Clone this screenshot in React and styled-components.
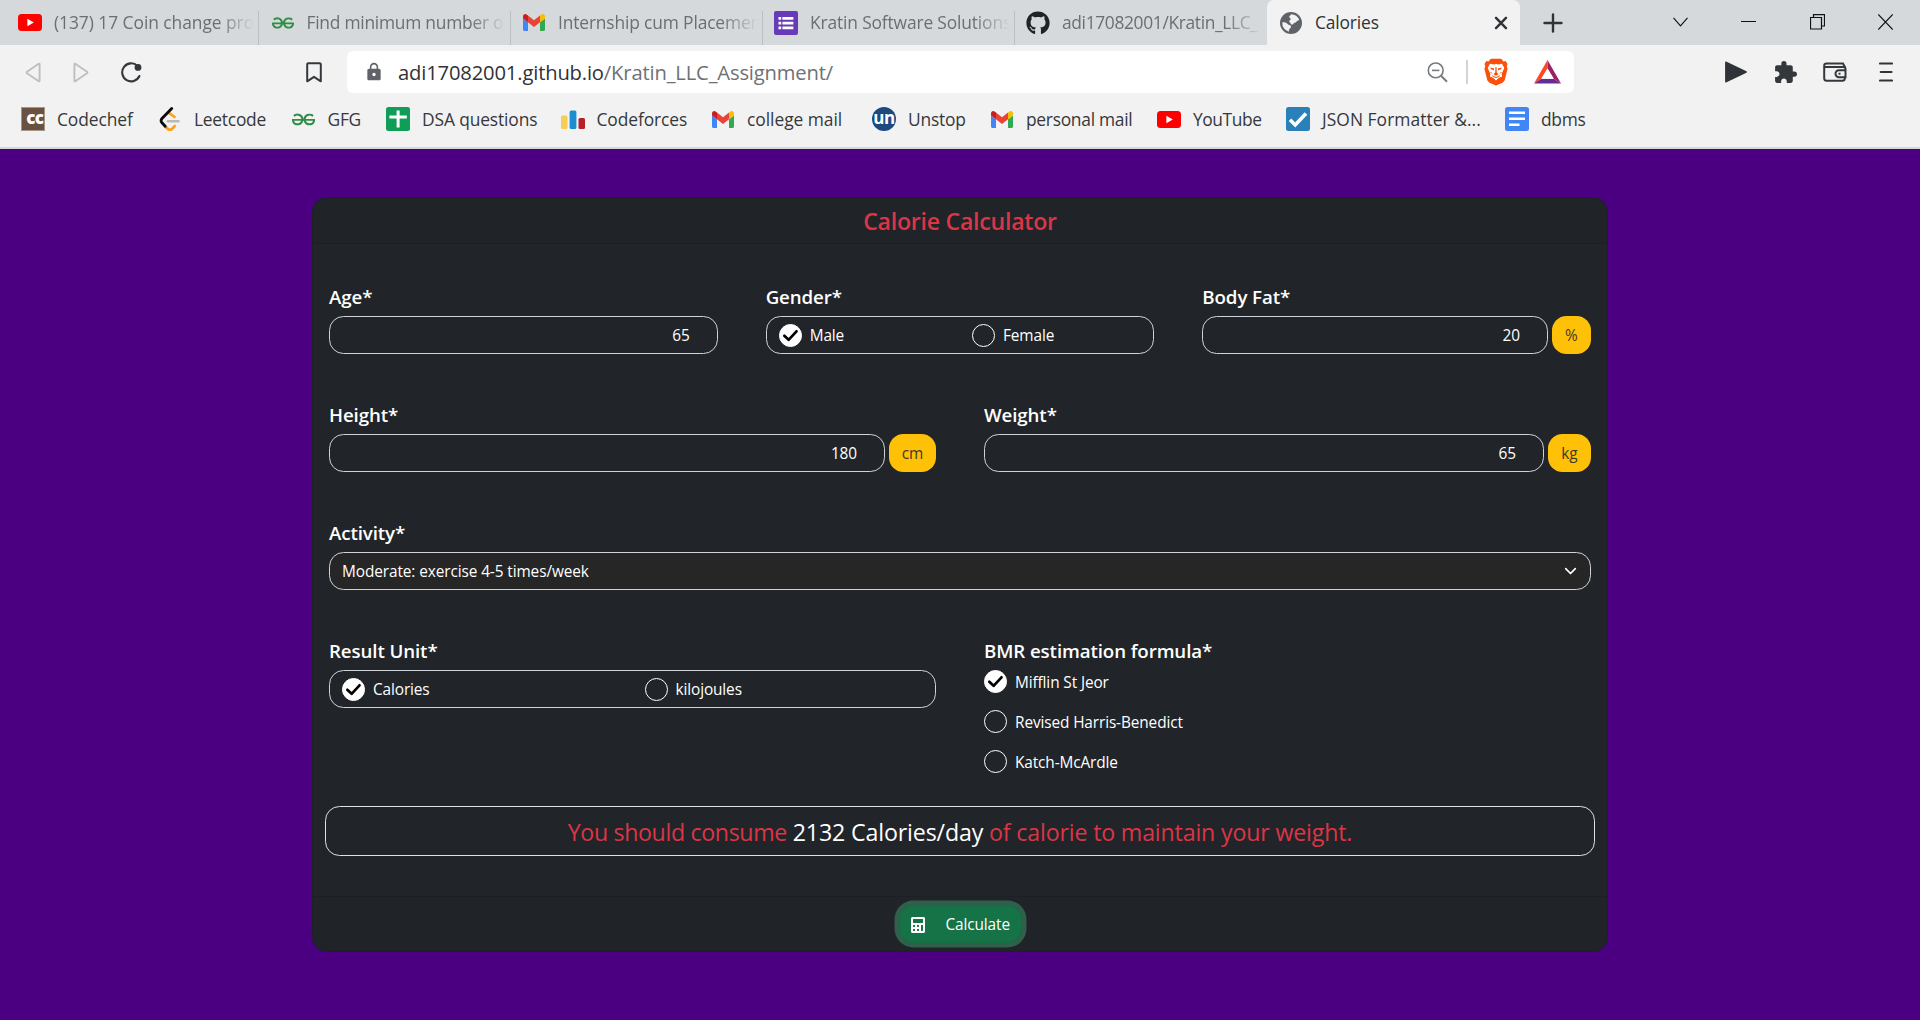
import React, { useState } from 'react';
import styled, { createGlobalStyle, css } from 'styled-components';
import { FaGithub, FaCalculator } from 'react-icons/fa';
import { SiGeeksforgeeks } from 'react-icons/si';
import { MdExtension, MdLock } from 'react-icons/md';

const GlobalStyle = createGlobalStyle`
  *, *::before, *::after { box-sizing: border-box; }
  body {
    margin: 0;
    background: #4b0082;
    font-family: "Open Sans", "Noto Sans", sans-serif;
  }
  svg { display: block; flex: none; }
`;

const Page = styled.div`
  width: 100%;
  min-height: 1020px;
  overflow: hidden;
`;

/* ---------- browser frame ---------- */

const TabStrip = styled.div`
  display: flex;
  height: 45px;
  padding-left: 7px;
  background: #d5d9dc;
`;

const Tab = styled.div`
  display: flex;
  align-items: center;
  flex: none;
  width: ${p => (p.$active ? 253 : 252)}px;
  padding: 0 12px 0 ${p => p.$pad ?? 11}px;
  color: ${p => (p.$active ? '#2f3337' : '#6b6f73')};
  ${p => p.$active && css`
    background: #f2f2f2;
    border-radius: 7px 7px 0 0;
  `}
  ${p => p.$divider && css`
    background: linear-gradient(#bcbfc1, #bcbfc1) right bottom / 1.5px 34px no-repeat;
  `}
`;

const TabIcon = styled.span`
  display: flex;
  align-items: center;
  justify-content: center;
  flex: none;
  width: 24px;
  height: 26px;
`;

const TabTitle = styled.span`
  flex: 1;
  min-width: 0;
  margin-left: 12px;
  margin-right: -7px;
  padding-bottom: 1px;
  white-space: nowrap;
  font-size: 17.4px;
  line-height: 26px;
  letter-spacing: ${p => p.$track ?? 0}px;
  font-weight: ${p => (p.$fade ? 400 : 500)};
  ${p => p.$fade && css`
    mask-image: linear-gradient(90deg, #000 calc(100% - 36px), transparent);
  `}
`;

const NewTab = styled.div`
  display: flex;
  align-items: center;
  margin-left: 23px;
`;

const WindowControls = styled.div`
  display: flex;
  align-items: center;
  gap: 53.5px;
  margin-left: auto;
  padding: 0 27px 2px 0;
`;

const Toolbar = styled.div`
  display: flex;
  align-items: center;
  height: 54px;
  padding-left: 25px;
  background: #f2f2f2;
`;

const NavButtons = styled.div`
  display: flex;
  align-items: center;
  gap: 32px;
  width: 281px;
`;

const AddressBar = styled.div`
  display: flex;
  align-items: center;
  width: 1227px;
  height: 42px;
  margin-left: 25px;
  padding: 0 13px 0 17px;
  border-radius: 6px;
  background: #fff;
`;

const Url = styled.div`
  flex: 1;
  margin-left: 14px;
  font-size: 20.2px;
  line-height: 30px;
  letter-spacing: -0.16px;
  color: #6e7174;
  & > span { color: #2f3236; }
`;

const Separator = styled.span`
  width: 2px;
  height: 24px;
  margin: 0 16px 0 18px;
  background: #d4d4d4;
`;

const Shields = styled.div`
  display: flex;
  align-items: center;
  gap: 26px;
`;

const ToolbarActions = styled.div`
  display: flex;
  align-items: center;
  gap: 25.5px;
  margin-left: 151px;
  & > :last-child { margin-left: 6px; }
`;

const BookmarkBar = styled.div`
  display: flex;
  height: 50px;
  padding: 0 0 8px 21px;
  background: #f2f2f2;
  border-bottom: 2px solid #d5d9dc;
`;

const Bookmark = styled.div`
  display: flex;
  align-items: center;
  flex: none;
  gap: 12px;
  width: ${p => p.$w}px;
  font-size: 17.4px;
  line-height: 26px;
  letter-spacing: ${p => p.$track ?? -0.1}px;
  white-space: nowrap;
  color: #35383c;
`;

const BookmarkIcon = styled.span`
  display: flex;
  align-items: center;
  justify-content: center;
  width: 24px;
  height: 24px;
`;

const CodechefBadge = styled.span`
  display: flex;
  align-items: center;
  justify-content: flex-end;
  width: 24px;
  height: 24px;
  padding: 0 1px 2px 0;
  border: 1px solid #a59788;
  background: #6b5140;
  color: #fff;
  font-size: 17px;
  font-weight: 800;
  letter-spacing: -0.8px;
`;

const UnstopBadge = styled.span`
  display: flex;
  align-items: center;
  justify-content: center;
  width: 24px;
  height: 24px;
  padding-bottom: 3px;
  border-radius: 50%;
  background: #1c4980;
  color: #fff;
  font-size: 17px;
  font-weight: 700;
  letter-spacing: -0.5px;
`;

/* ---------- calculator ---------- */

const Main = styled.main`
  display: flex;
  justify-content: center;
  padding-top: 48px;
`;

const Card = styled.section`
  width: 1296px;
  border: 1px solid #1e1f28;
  border-radius: 15px;
  overflow: hidden;
  background: #212529;
  color: #fff;
`;

const CardHeader = styled.header`
  display: flex;
  align-items: center;
  justify-content: center;
  height: 46px;
  padding-top: 1px;
  border-bottom: 1px solid #1c1f23;
  background: #202327;
`;

const Title = styled.h1`
  margin: 0;
  font-size: 23.2px;
  font-weight: 600;
  line-height: 32px;
  letter-spacing: -0.28px;
  color: #dc3545;
`;

const Form = styled.div`
  display: flex;
  flex-direction: column;
  gap: 47px;
  padding: 39px 16px 0;
`;

const FormRow = styled.div`
  display: grid;
  grid-template-columns: repeat(${p => p.$cols}, 1fr);
  gap: 48px;
`;

const FieldLabel = styled.div`
  height: 28px;
  margin-bottom: 5px;
  font-size: 18.7px;
  font-weight: 650;
  line-height: 28px;
  letter-spacing: ${p => p.$track ?? -0.1}px;
`;

const InputGroup = styled.div`
  display: flex;
  gap: 4px;
`;

const Control = styled.div`
  display: flex;
  align-items: center;
  flex: 1;
  height: 38px;
  border: 1px solid #ced4da;
  border-radius: 14.5px;
  font-size: 15.4px;
  letter-spacing: -0.1px;
`;

const NumberControl = styled(Control)`
  justify-content: flex-end;
  padding-right: 27px;
`;

const SelectControl = styled(Control)`
  justify-content: space-between;
  padding: 0 13px 0 12px;
  background: #262626;
`;

const RadioControl = styled(Control)`
  display: grid;
  grid-template-columns: calc(50% + 7px) 1fr;
  padding: 0 2px 0 12px;
`;

const Unit = styled.div`
  display: flex;
  align-items: center;
  justify-content: center;
  width: ${p => p.$w}px;
  height: 38px;
  border-radius: 14.5px;
  background: #ffc107;
  color: #3d3a2a;
  font-size: 15.4px;
`;

const Choice = styled.div`
  display: flex;
  align-items: center;
  gap: 8px;
  height: 23px;
  font-size: 15.4px;
  letter-spacing: -0.12px;
  cursor: pointer;
  & > span:last-child { line-height: 22px; padding-top: 2px; }
`;

const Dot = styled.span`
  display: flex;
  width: 23px;
  height: 23px;
  border-radius: 50%;
  border: 1px solid #fff;
  background: ${p => (p.$on ? '#fff' : 'transparent')};
`;

const Stack = styled.div`
  display: flex;
  flex-direction: column;
  gap: 17px;
`;

const Result = styled.div`
  display: flex;
  align-items: center;
  justify-content: center;
  height: 50px;
  margin: 33px 12px 40px;
  padding-top: 1px;
  border: 1px solid #dee2e6;
  border-radius: 14.5px;
  font-size: 23.2px;
  color: #dc3545;
  white-space: pre;
`;

const Phrase = styled.span`
  letter-spacing: ${p => p.$track}px;
  color: ${p => (p.$strong ? '#fff' : '#dc3545')};
`;

const CardFooter = styled.footer`
  display: flex;
  align-items: center;
  justify-content: center;
  height: 55px;
  border-top: 1px solid #1c1f23;
  background: #202327;
`;

const CalculateButton = styled.button`
  display: flex;
  align-items: center;
  gap: 20px;
  width: 123px;
  height: 38px;
  padding: 1px 0 0 10px;
  border: 1px solid #146c43;
  border-radius: 14.5px;
  background: #157347;
  box-shadow: 0 0 0 4.5px #305f4b;
  color: #fff;
  font: 400 15.4px/22px "Open Sans", sans-serif;
  letter-spacing: -0.12px;
`;

/* ---------- drawings ---------- */

const YouTubeIcon = () => (
  <svg width="24" height="17" viewBox="0 0 24 17">
    <rect width="24" height="17" rx="3.5" fill="#f00" />
    <path d="M9.4 4.8v7.4L15.8 8.5z" fill="#fff" />
  </svg>
);

const GmailIcon = () => (
  <svg width="22" height="17" viewBox="52 42 88 66" preserveAspectRatio="none">
    <path fill="#4285f4" d="M58 108h14V74L52 59v43c0 3.32 2.69 6 6 6" />
    <path fill="#34a853" d="M120 108h14c3.32 0 6-2.69 6-6V59l-20 15" />
    <path fill="#fbbc04" d="M120 48v26l20-15v-8c0-7.42-8.47-11.65-14.4-7.2" />
    <path fill="#ea4335" d="M72 74V48l24 18 24-18v26L96 92" />
    <path fill="#c5221f" d="M52 51v8l20 15V48l-5.6-4.2c-5.94-4.45-14.4-.22-14.4 7.2" />
  </svg>
);

const FormsIcon = () => (
  <svg width="24" height="24" viewBox="0 0 24 24">
    <rect width="24" height="24" rx="2" fill="#673ab7" />
    <path fill="#fff" d="M4.500 6h2.700v2.700H4.500zM4.500 10.800h2.700v2.700H4.500zM4.500 15.600h2.700v2.700H4.500zM8.400 6h11v2.700h-11zM8.400 10.800h11v2.700h-11zM8.400 15.600h11v2.700h-11z" />
  </svg>
);

const GlobeIcon = () => (
  <svg width="22" height="22" viewBox="0 0 22 22">
    <circle cx="11" cy="11" r="11" fill="#5f6368" />
    <path d="M11.200 2.200c3.600.1 6.700 2.300 8 5.400-.8 1.400-2 .9-2.800 2.100-.7 1.200-2.700 1-3.200 2.300-.5 1-2.300.7-2.600-.6-.2-1.100-1.500-.9-1.400-2.100.1-1.100 1.500-1 1.600-2 .1-1.200-1.700-1.100-1.600-2.500.1-1.200 1.700-1.300 2-2.600z" fill="#f2f2f2" />
    <path d="M2.300 10.400c2.200-.2 4.200.2 5.300 1.700 1 1.300 3.100.7 3.400 2.300.3 1.500-1.500 1.700-1.800 3-.2 1-.5 1.600-.3 2.300a8.900 8.900 0 0 1-6.600-9.300z" fill="#f2f2f2" />
  </svg>
);

const LeetcodeIcon = () => (
  <svg width="22" height="24" viewBox="0 0 22 24" fill="none" strokeLinecap="round">
    <path d="M9.500 5.600 15.600 10" stroke="#ffa116" strokeWidth="2.600" />
    <path d="M6.300 19.600l2.500 2.300c1.300 1.100 3.200 1 4.400-.2l2.500-2.600" stroke="#ffa116" strokeWidth="2.800" />
    <path d="M12.700 1.500 3 11.500c-1.100 1.300-1.100 3 0 4.300l3.200 3.500" stroke="#0a0a0a" strokeWidth="2.800" />
    <path d="M9 14.200h10.500" stroke="#b9b9b9" strokeWidth="2.600" />
  </svg>
);

const PlusSheetIcon = () => (
  <svg width="24" height="24" viewBox="0 0 24 24">
    <rect width="24" height="24" rx="2.500" fill="#0f9d58" />
    <path d="M10.600 3.500h3v5h7.200v3h-7.200v9h-3v-9H3.400v-3h7.200z" fill="#fff" />
  </svg>
);

const CodeforcesIcon = () => (
  <svg width="24" height="20" viewBox="0 0 24 20">
    <rect x="0" y="6.500" width="6.500" height="13.500" rx="1.500" fill="#f6cd55" />
    <rect x="8.600" y="1.500" width="6.800" height="18.500" rx="1.500" fill="#1c8dd0" />
    <rect x="17.500" y="9" width="6.500" height="11" rx="1.500" fill="#b71f2a" />
  </svg>
);

const CheckBadgeIcon = () => (
  <svg width="24" height="24" viewBox="0 0 24 24">
    <rect width="24" height="24" rx="2.500" fill="#2a80b9" />
    <path d="M4 12.800 9.200 18 20 6.400" fill="none" stroke="#fff" strokeWidth="3.600" />
  </svg>
);

const DocsIcon = () => (
  <svg width="24" height="24" viewBox="0 0 24 24">
    <rect width="24" height="24" rx="2.500" fill="#4285f4" />
    <path d="M4 4.400h16v2.600H4zM4 10.400h16v2.600H4zM4 16.400h10.500v2.600H4z" fill="#fff" />
  </svg>
);

const Triangle = ({ flip }) => (
  <svg width="16" height="21" viewBox="0 0 16 21" transform={flip ? 'scale(-1 1)' : undefined}>
    <path d="M14.600 2.300v16.400c0 .6-.5.8-.9.5L2 11.300a1 1 0 0 1 0-1.600L13.700 1.800c.4-.3.9-.1.9.5z" fill="none" stroke="#bdbfc0" strokeWidth="1.900" strokeLinejoin="round" />
  </svg>
);

const ReloadIcon = () => (
  <svg width="21" height="21" viewBox="0 0 21 21">
    <path d="M18.400 14A9 9 0 1 1 16.500 3.900" fill="none" stroke="#34383c" strokeWidth="2.100" strokeLinecap="round" />
    <circle cx="17" cy="5.400" r="3.400" fill="#34383c" />
  </svg>
);

const BookmarkIconOutline = () => (
  <svg width="16" height="21" viewBox="0 0 16 21">
    <path d="M1.200 2.300c0-.7.4-1.100 1.100-1.100h11.400c.7 0 1.100.4 1.100 1.100v17L8 14.800l-6.800 4.500z" fill="none" stroke="#34383c" strokeWidth="2" strokeLinejoin="round" />
  </svg>
);

const ZoomOutIcon = () => (
  <svg width="21" height="21" viewBox="0 0 21 21" fill="none" stroke="#777b7e" strokeWidth="1.600">
    <circle cx="8.700" cy="8.400" r="7.400" />
    <path d="M5 8.400h7.400" />
    <path d="M14 13.800l6 6" strokeWidth="2" />
  </svg>
);

const LionIcon = () => (
  <svg width="24" height="28" viewBox="0 0 24 28">
    <path d="M6.800.8h10.400l2.300 2.600 2.200-.4 1.800 2.900-.8 2.300.9 2.500-3 11.700-2 2.400L12 27.600l-6.600-2.800-2-2.400L.4 10.700l.9-2.500-.8-2.300L2.300 3l2.200.4z" fill="#fb4f0a" />
    <path d="M6 5.800l4.200.6L12 5.800l1.800.6 4.200-.6 2.300 4.100-2.700 6.200.5 2.400-3.200 1.300L12 22.600l-2.900-2.800-3.200-1.300.5-2.400-2.700-6.200z" fill="#fff" />
    <path d="M6.300 9.600l4 .8-.5 1.900-2.900-1zM17.700 9.600l-4 .8.5 1.900 2.900-1zM11.500 9h1l.3 5.600 1.700 1.600L12 17.800l-2.500-1.600 1.700-1.600z" fill="#fb4f0a" />
    <path d="M8.200 17.800 12 19.600l3.800-1.800M6.500 14l1.500 1.500M17.500 14 16 15.500" stroke="#fb4f0a" strokeWidth="1" fill="none" />
  </svg>
);

const BatIcon = () => (
  <svg width="27" height="24" viewBox="0 0 27 24">
    <path d="M13.500 0v8.500L7.300 18.700 0 23.500z" fill="#ff4724" />
    <path d="M13.500 0v8.500l6.200 10.200 7.300 4.800z" fill="#9e1f63" />
    <path d="M0 23.500l7.300-4.800h12.400l7.300 4.800z" fill="#662d91" />
    <path d="M13.500 8.500l6.200 10.200H7.300z" fill="#fff" />
  </svg>
);

const PlayIcon = () => (
  <svg width="22" height="22" viewBox="0 0 22 22">
    <path d="M.8 1.200v19.600L21.200 11z" fill="#2f3337" stroke="#2f3337" strokeWidth="1.400" strokeLinejoin="round" />
  </svg>
);

const WalletIcon = () => (
  <svg width="24" height="20" viewBox="0 0 24 20" fill="none" stroke="#34383c" strokeWidth="2">
    <path d="M21.800 5.800V4.700L20 1.500H3.500A2.300 2.300 0 0 0 1.200 3.800v12.400a2.500 2.500 0 0 0 2.500 2.500h15.600a2.500 2.500 0 0 0 2.500-2.500v-1" />
    <path d="M1.200 5h19.300a2 2 0 0 1 2 2v8.300H16a3.500 3.500 0 0 1 0-7h6.500M15.500 11.800h2" />
  </svg>
);

const MenuIcon = () => (
  <svg width="14" height="20" viewBox="0 0 14 20" stroke="#2f3337" strokeWidth="2.200" strokeLinecap="round">
    <path d="M1 1.500h12M1.800 10h10.700M1 18.500h12" />
  </svg>
);

const Check = () => (
  <svg width="21" height="21" viewBox="0 0 21 21">
    <path d="M4.300 10.800 8.600 14.800 16.500 6.300" fill="none" stroke="#000" strokeWidth="2.700" strokeLinecap="round" strokeLinejoin="round" />
  </svg>
);

/* ---------- data ---------- */

const tabs = [
  { title: '(137) 17 Coin change pro', icon: <YouTubeIcon />, divider: true, track: -0.05, pad: 11 },
  { title: 'Find minimum number o', icon: <SiGeeksforgeeks size={22} color="#2f8d46" />, divider: true, track: -0.25, pad: 11.5 },
  { title: 'Internship cum Placemen', icon: <GmailIcon />, divider: true, track: -0.15, pad: 11 },
  { title: 'Kratin Software Solutions', icon: <FormsIcon />, divider: true, track: -0.15, pad: 11 },
  { title: 'adi17082001/Kratin_LLC_', icon: <FaGithub size={24} color="#1f2328" />, track: -0.35, pad: 11 },
];

const bookmarks = [
  { name: 'Codechef', icon: <CodechefBadge>cc</CodechefBadge>, w: 137 },
  { name: 'Leetcode', icon: <LeetcodeIcon />, w: 133.5, track: -0.25 },
  { name: 'GFG', icon: <SiGeeksforgeeks size={23} color="#2f8d46" />, w: 94.5, track: -0.25 },
  { name: 'DSA questions', icon: <PlusSheetIcon />, w: 174.5, track: -0.13 },
  { name: 'Codeforces', icon: <CodeforcesIcon />, w: 150.5 },
  { name: 'college mail', icon: <GmailIcon />, w: 161, track: -0.04 },
  { name: 'Unstop', icon: <UnstopBadge>un</UnstopBadge>, w: 118, track: -0.2 },
  { name: 'personal mail', icon: <GmailIcon />, w: 167, track: -0.28 },
  { name: 'YouTube', icon: <YouTubeIcon />, w: 129, track: -0.42 },
  { name: 'JSON Formatter &...', icon: <CheckBadgeIcon />, w: 219, track: 0.05 },
  { name: 'dbms', icon: <DocsIcon />, w: 90, track: -0.3 },
];

const formulas = ['Mifflin St Jeor', 'Revised Harris-Benedict', 'Katch-McArdle'];

function Radio({ label, on, onSelect }) {
  return (
    <Choice onClick={onSelect}>
      <Dot $on={on}>{on && <Check />}</Dot>
      <span>{label}</span>
    </Choice>
  );
}

function Field({ label, track, children }) {
  return (
    <div>
      <FieldLabel $track={track}>{label}</FieldLabel>
      {children}
    </div>
  );
}

function NumberField({ label, value, unit, unitWidth }) {
  return (
    <Field label={label}>
      <InputGroup>
        <NumberControl>{value}</NumberControl>
        {unit && <Unit $w={unitWidth}>{unit}</Unit>}
      </InputGroup>
    </Field>
  );
}

function RadioField({ label, options }) {
  const [picked, setPicked] = useState(options[0]);
  return (
    <Field label={label}>
      <RadioControl>
        {options.map(o => (
          <Radio key={o} label={o} on={o === picked} onSelect={() => setPicked(o)} />
        ))}
      </RadioControl>
    </Field>
  );
}

function BrowserFrame() {
  return (
    <header>
      <TabStrip>
        {tabs.map(t => (
          <Tab key={t.title} $divider={t.divider} $pad={t.pad}>
            <TabIcon>{t.icon}</TabIcon>
            <TabTitle $fade $track={t.track}>{t.title}</TabTitle>
          </Tab>
        ))}
        <Tab $active $pad={12}>
          <TabIcon><GlobeIcon /></TabIcon>
          <TabTitle $track={-0.15}>Calories</TabTitle>
          <svg width="14" height="14" viewBox="0 0 14 14" stroke="#2f3337" strokeWidth="2.400" strokeLinecap="round">
            <path d="M2 1.800l10 10.400M12 1.800 2 12.200" />
          </svg>
        </Tab>
        <NewTab>
          <svg width="20" height="20" viewBox="0 0 20 20" stroke="#2f3337" strokeWidth="2.400" strokeLinecap="round">
            <path d="M10 1.500v17M1.500 10h17" />
          </svg>
        </NewTab>
        <WindowControls>
          <svg width="15" height="10" viewBox="0 0 15 10" fill="none" stroke="#111" strokeWidth="1.100"><path d="M.5.8l7 8 7-8" /></svg>
          <svg width="15" height="10" viewBox="0 0 15 10"><path d="M0 4.500h15" stroke="#111" /></svg>
          <svg width="15" height="16" viewBox="0 0 15 16" fill="none" stroke="#111" strokeWidth="1.200"><path d="M.5 3.500h11v11.500H.5zM3.500 3.500V.6h11v11.400h-3" /></svg>
          <svg width="15" height="16" viewBox="0 0 15 16" stroke="#111" strokeWidth="1.100"><path d="M.3.500l14.400 15M14.700.500.3 15.500" /></svg>
        </WindowControls>
      </TabStrip>
      <Toolbar>
        <NavButtons>
          <Triangle />
          <Triangle flip />
          <ReloadIcon />
        </NavButtons>
        <BookmarkIconOutline />
        <AddressBar>
          <MdLock size={20} color="#5f6368" />
          <Url><span>adi17082001.github.io</span>/Kratin_LLC_Assignment/</Url>
          <ZoomOutIcon />
          <Separator />
          <Shields>
            <LionIcon />
            <BatIcon />
          </Shields>
        </AddressBar>
        <ToolbarActions>
          <PlayIcon />
          <MdExtension size={25} color="#34383c" />
          <WalletIcon />
          <MenuIcon />
        </ToolbarActions>
      </Toolbar>
      <BookmarkBar>
        {bookmarks.map(b => (
          <Bookmark key={b.name} $w={b.w} $track={b.track}>
            <BookmarkIcon>{b.icon}</BookmarkIcon>
            {b.name}
          </Bookmark>
        ))}
      </BookmarkBar>
    </header>
  );
}

function Calculator() {
  const [formula, setFormula] = useState(formulas[0]);
  return (
    <Card>
      <CardHeader><Title>Calorie Calculator</Title></CardHeader>
      <Form>
        <FormRow $cols={3}>
          <NumberField label="Age*" value="65" />
          <RadioField label="Gender*" options={['Male', 'Female']} />
          <NumberField label="Body Fat*" value="20" unit="%" unitWidth={39} />
        </FormRow>
        <FormRow $cols={2}>
          <NumberField label="Height*" value="180" unit="cm" unitWidth={47} />
          <NumberField label="Weight*" value="65" unit="kg" unitWidth={43} />
        </FormRow>
        <FormRow $cols={1}>
          <Field label="Activity*">
            <SelectControl>
              Moderate: exercise 4-5 times/week
              <svg width="13" height="9" viewBox="0 0 13 9" fill="none" stroke="#fff" strokeWidth="1.700" strokeLinecap="round" strokeLinejoin="round"><path d="M1.700 1.700l4.800 4.800 4.800-4.800" /></svg>
            </SelectControl>
          </Field>
        </FormRow>
        <FormRow $cols={2}>
          <RadioField label="Result Unit*" options={['Calories', 'kilojoules']} />
          <Field label="BMR estimation formula*">
            <Stack>
              {formulas.map(f => (
                <Radio key={f} label={f} on={f === formula} onSelect={() => setFormula(f)} />
              ))}
            </Stack>
          </Field>
        </FormRow>
      </Form>
      <Result>
        <Phrase $track={-0.36}>You should consume </Phrase>
        <Phrase $strong $track={-0.14}>2132 Calories/day</Phrase>
        <Phrase $track={-0.17}> of calorie to maintain your weight.</Phrase>
      </Result>
      <CardFooter>
        <CalculateButton>
          <FaCalculator size={16} />
          Calculate
        </CalculateButton>
      </CardFooter>
    </Card>
  );
}

export default function App() {
  return (
    <Page>
      <GlobalStyle />
      <BrowserFrame />
      <Main><Calculator /></Main>
    </Page>
  );
}
